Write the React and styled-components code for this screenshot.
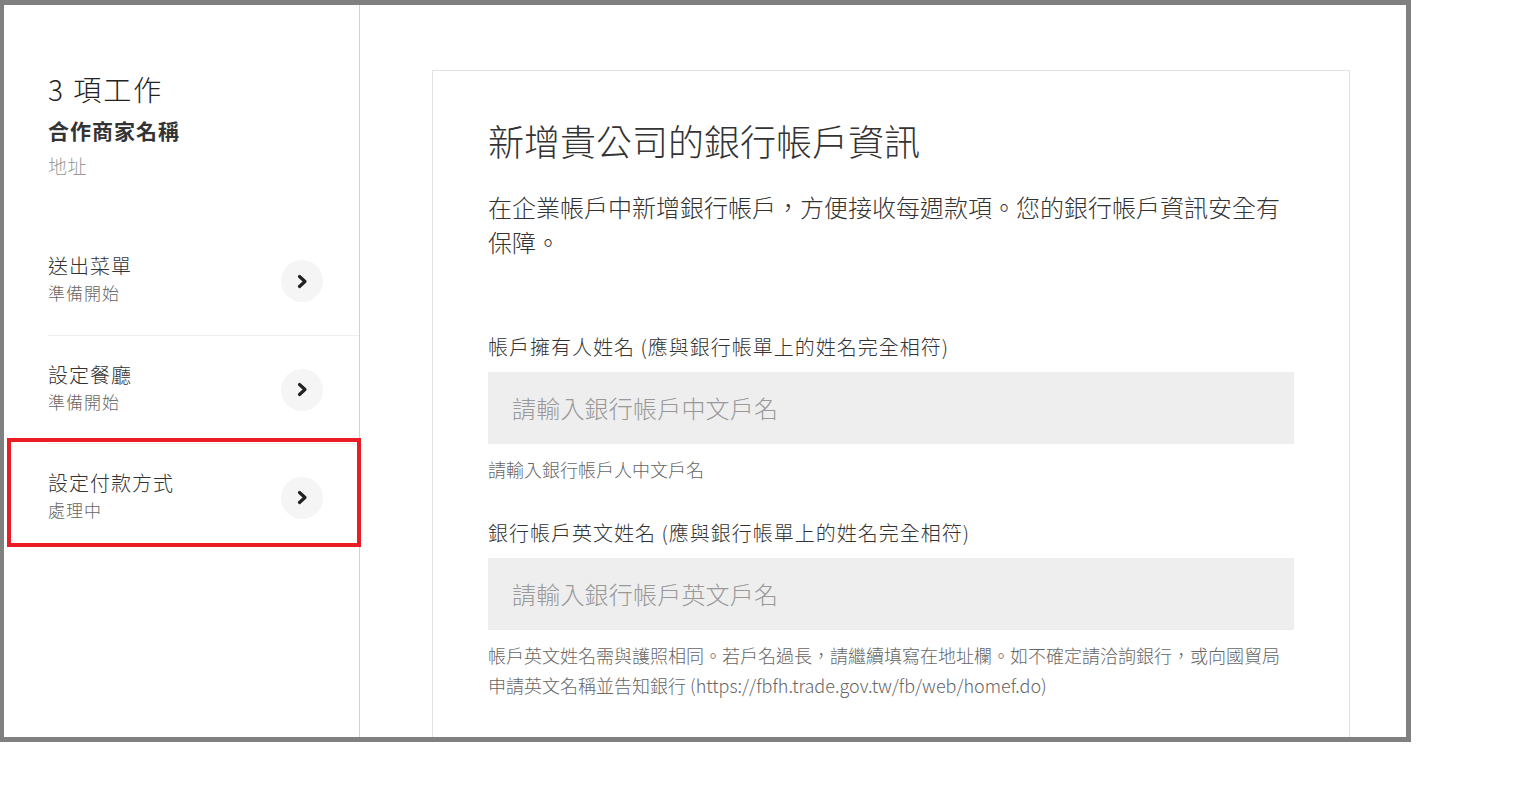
import React from "react";
import styled, { createGlobalStyle } from "styled-components";

const Global = createGlobalStyle`
  html, body { margin: 0; padding: 0; background: #fff; }
  body { font-family: "Noto Sans CJK TC", "Noto Sans", sans-serif; color: #333; }
  * { box-sizing: border-box; }
`;

const Frame = styled.div`
  position: relative;
  width: 1411px;
  height: 742px;
  border: 5px solid #808080;
  border-left-width: 4px;
  display: flex;
  overflow: hidden;
  background: #fff;
`;

const Sidebar = styled.aside`
  width: 356px;
  flex: none;
  border-right: 1px solid #d2d2d2;
  padding-top: 66px;
`;

const Header = styled.div`
  padding-left: 44px;
`;

const JobCount = styled.h2`
  margin: 0;
  font-size: 28px;
  line-height: 36px;
  font-weight: 300;
  color: #222;
  letter-spacing: 2px;
`;

const Merchant = styled.div`
  margin-top: 8px;
  font-size: 21px;
  line-height: 30px;
  font-weight: 700;
  color: #333;
  letter-spacing: 1px;
`;

const Address = styled.div`
  margin-top: 8px;
  font-size: 19px;
  line-height: 26px;
  font-weight: 300;
  color: #9a9a9a;
  letter-spacing: 0.5px;
`;

const TaskList = styled.ul`
  list-style: none;
  margin: 48px 0 0 44px;
  padding: 0;
`;

const Task = styled.li`
  display: flex;
  align-items: center;
  justify-content: space-between;
  height: 108px;
  padding: 0 36px 0 0;
  border-top: ${(p) => (p.$first ? "none" : "1px solid #efefef")};
`;

const TaskText = styled.div`
  display: flex;
  flex-direction: column;
  margin-bottom: 4px;
`;

const TaskTitle = styled.div`
  font-size: 20px;
  line-height: 27px;
  font-weight: 300;
  color: #333;
  letter-spacing: 1px;
`;

const TaskStatus = styled.div`
  font-size: 17px;
  line-height: 27px;
  font-weight: 300;
  color: #666;
  letter-spacing: 1px;
`;

const ArrowButton = styled.button`
  width: 42px;
  height: 42px;
  border-radius: 50%;
  border: none;
  background: #f5f5f5;
  display: flex;
  align-items: center;
  justify-content: center;
  padding: 0;
  cursor: pointer;
`;

const Highlight = styled.div`
  position: absolute;
  left: 3px;
  top: 433px;
  width: 354px;
  height: 109px;
  border: 4px solid #ec1c24;
  pointer-events: none;
`;

const Main = styled.main`
  flex: 1;
  padding: 65px 56px 0 72px;
  overflow: hidden;
`;

const Card = styled.section`
  border: 1px solid #e3e3e3;
  padding: 45px 55px 120px 55px;
`;

const Title = styled.h1`
  margin: 0;
  font-size: 36px;
  line-height: 48px;
  font-weight: 300;
  color: #333;
`;

const Description = styled.p`
  margin: 25px 0 0;
  font-size: 24px;
  line-height: 35px;
  font-weight: 300;
  color: #333;
`;

const Field = styled.div`
  margin-top: ${(p) => p.$top}px;
`;

const Label = styled.label`
  display: block;
  font-size: 20px;
  line-height: 30px;
  font-weight: 300;
  color: #333;
  letter-spacing: 1px;
`;

const Input = styled.input`
  display: block;
  width: 100%;
  height: 72px;
  margin-top: 10px;
  border: none;
  outline: none;
  background: #eeeeee;
  padding: 0 24px 2px;
  font-family: "Noto Sans CJK TC", "Noto Sans", sans-serif;
  font-size: 24px;
  font-weight: 300;
  letter-spacing: 2px;
  color: #333;
  &::placeholder { color: #999; letter-spacing: 0.2px; }
`;

const Helper = styled.p`
  margin: 10px 0 0;
  font-size: 18px;
  line-height: 30px;
  font-weight: 300;
  color: #666;
`;

const Chevron = () => (
  <svg width="11" height="15" viewBox="0 0 11 15">
    <polyline points="2.5,2.5 8,7.5 2.5,12.5" fill="none" stroke="#222" strokeWidth="3.2" strokeLinecap="round" strokeLinejoin="round" />
  </svg>
);

const tasks = [
  { title: "送出菜單", status: "準備開始" },
  { title: "設定餐廳", status: "準備開始" },
  { title: "設定付款方式", status: "處理中" },
];

export default function App() {
  return (
    <>
      <Global />
      <Frame>
        <Sidebar>
          <Header>
            <JobCount>3 項工作</JobCount>
            <Merchant>合作商家名稱</Merchant>
            <Address>地址</Address>
          </Header>
          <TaskList>
            {tasks.map((t, i) => (
              <Task key={t.title} $first={i === 0}>
                <TaskText>
                  <TaskTitle>{t.title}</TaskTitle>
                  <TaskStatus>{t.status}</TaskStatus>
                </TaskText>
                <ArrowButton aria-label={t.title}>
                  <Chevron />
                </ArrowButton>
              </Task>
            ))}
          </TaskList>
        </Sidebar>
        <Main>
          <Card>
            <Title>新增貴公司的銀行帳戶資訊</Title>
            <Description>
              在企業帳戶中新增銀行帳戶，方便接收每週款項。您的銀行帳戶資訊安全有保障。
            </Description>
            <Field $top={73}>
              <Label>帳戶擁有人姓名 (應與銀行帳單上的姓名完全相符)</Label>
              <Input placeholder="請輸入銀行帳戶中文戶名" />
              <Helper>請輸入銀行帳戶人中文戶名</Helper>
            </Field>
            <Field $top={34}>
              <Label>銀行帳戶英文姓名 (應與銀行帳單上的姓名完全相符)</Label>
              <Input placeholder="請輸入銀行帳戶英文戶名" />
              <Helper>
                帳戶英文姓名需與護照相同。若戶名過長，請繼續填寫在地址欄。如不確定請洽詢銀行，或向國貿局申請英文名稱並告知銀行 (https://fbfh.trade.gov.tw/fb/web/homef.do)
              </Helper>
            </Field>
          </Card>
        </Main>
        <Highlight />
      </Frame>
    </>
  );
}
